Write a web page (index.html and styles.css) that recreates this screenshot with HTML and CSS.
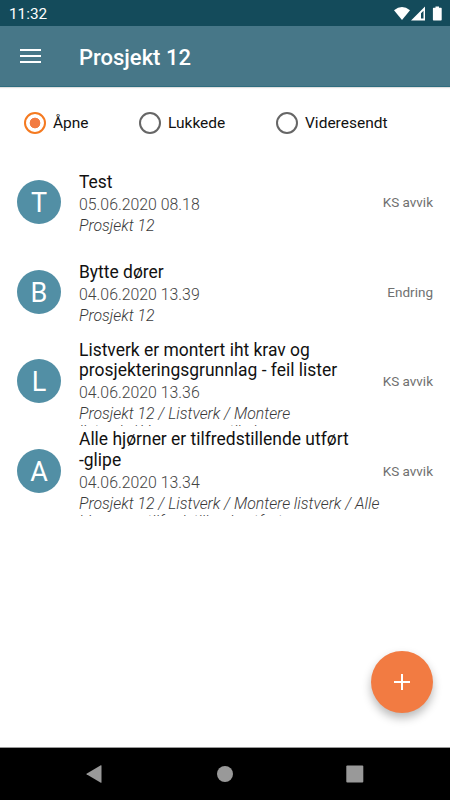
FILE: index.html
```
<!DOCTYPE html>
<html lang="no">
<head>
    <meta charset="UTF-8">
    <meta name="viewport" content="width=device-width, initial-scale=1.0">
    <title>Prosjekt 12</title>
    <link rel="stylesheet" href="styles.css">
</head>
<body>
    <div class="status-bar">
        <span class="clock">11:32</span>
        <svg class="status-icons" width="50" height="18" viewBox="0 0 50 18">
            <path fill="#fff" d="M1 4.2 Q9 -2 17 4.2 L9 14 Z"/>
            <path fill="#fff" fill-rule="evenodd" d="M18 14.5 L32 .5 V14.5 Z M28 7.2 V12.5 H30.5 V4.7 Z"/>
            <path fill="#fff" d="M42.5 .5 h3.5 v1.2 h2 q.7 0 .7 .7 v11.4 q0 .7 -.7 .7 h-7.4 q-.7 0 -.7 -.7 v-11.4 q0 -.7 .7 -.7 h1.9 z"/>
        </svg>
    </div>

    <header class="toolbar">
        <button class="menu" type="button" aria-label="Meny">
            <svg width="22" height="16" viewBox="0 0 22 16">
                <path fill="#fff" d="M0 1h21v2H0zM0 7h21v2H0zM0 13h21v2H0z"/>
            </svg>
        </button>
        <h1>Prosjekt 12</h1>
    </header>

    <main>
        <form class="filters">
            <label class="open"><input type="radio" name="status" checked><span>Åpne</span></label>
            <label class="closed"><input type="radio" name="status"><span>Lukkede</span></label>
            <label><input type="radio" name="status"><span>Videresendt</span></label>
        </form>

        <ul class="cases">
            <li>
                <div class="avatar">T</div>
                <div class="details">
                    <h2>Test</h2>
                    <time>05.06.2020 08.18</time>
                    <p>Prosjekt 12</p>
                </div>
                <span class="type">KS avvik</span>
            </li>
            <li>
                <div class="avatar">B</div>
                <div class="details">
                    <h2>Bytte dører</h2>
                    <time>04.06.2020 13.39</time>
                    <p>Prosjekt 12</p>
                </div>
                <span class="type">Endring</span>
            </li>
            <li class="long">
                <div class="avatar">L</div>
                <div class="details">
                    <h2>Listverk er montert iht krav og<br>prosjekteringsgrunnlag - feil lister</h2>
                    <time>04.06.2020 13.36</time>
                    <p>Prosjekt 12 / Listverk / Montere<br>listverk / Vegger er vertikale</p>
                </div>
                <span class="type">KS avvik</span>
            </li>
            <li class="long">
                <div class="avatar">A</div>
                <div class="details">
                    <h2>Alle hjørner er tilfredstillende utført<br>-glipe</h2>
                    <time>04.06.2020 13.34</time>
                    <p>Prosjekt 12 / Listverk / Montere listverk / Alle<br>hjørner er tilfredstillende utført</p>
                </div>
                <span class="type">KS avvik</span>
            </li>
        </ul>
    </main>

    <button class="fab" type="button" aria-label="Ny sak">
        <svg width="16" height="16" viewBox="0 0 16 16">
            <path fill="#fff" d="M7 0h2v7h7v2H9v7H7V9H0V7h7z"/>
        </svg>
    </button>

    <nav class="nav-bar">
        <svg width="18" height="20" viewBox="0 0 18 20"><path fill="#999" d="M.5 9.7 L14.8 1.3 Q15.5 1 15.5 1.8 V18.2 Q15.5 19 14.8 18.7 L.5 10.3 Q.1 10 .5 9.7z"/></svg>
        <svg width="18" height="20" viewBox="0 0 18 20"><circle cx="9" cy="10" r="8" fill="#999"/></svg>
        <svg width="18" height="20" viewBox="0 0 18 20"><rect x=".3" y="1.5" width="17" height="17" rx="1" fill="#999"/></svg>
    </nav>
</body>
</html>
```

FILE: styles.css
```
* {
    box-sizing: border-box;
}

body {
    display: flex;
    flex-direction: column;
    height: 100vh;
    margin: 0;
    overflow: hidden;
    background-color: #fff;
    font-family: Roboto, sans-serif;
}

h1, h2, p, ul {
    margin: 0;
    padding: 0;
}

button {
    padding: 0;
    border: none;
    background: none;
    cursor: pointer;
}

svg {
    display: block;
}

.status-bar {
    display: flex;
    justify-content: space-between;
    align-items: center;
    flex: none;
    height: 26px;
    padding: 0 7px 0 9px;
    background-color: #144b5b;
}

.clock {
    padding-top: 2px;
    color: #fff;
    font-size: 15.3px;
}

.status-icons {
    margin-top: 3px;
}

.toolbar {
    display: flex;
    align-items: center;
    flex: none;
    height: 61px;
    padding-left: 20px;
    background-color: #477788;
    border-bottom: 1px solid #2f6d7f;
    box-shadow: 0 1px 1px rgba(0, 0, 0, 0.12);
}

.menu {
    width: 59px;
}

h1 {
    color: #fff;
    font-size: 22px;
    font-weight: 500;
    padding-top: 3px;
}

main {
    flex: 1;
}

.filters {
    display: flex;
    height: 70.4px;
    padding: 1px 0 0 24px;
}

.filters label {
    display: flex;
    align-items: center;
    gap: 7px;
    color: #111;
    font-size: 15.5px;
}

.filters span {
    padding-top: 1px;
}

.filters .open {
    width: 115px;
}

.filters .closed {
    width: 137px;
}

.filters input {
    -webkit-appearance: none;
    appearance: none;
    width: 22px;
    height: 22px;
    margin: 0;
    border: 2px solid #666;
    border-radius: 50%;
}

.filters input:checked {
    border-color: #f57a20;
    background: radial-gradient(circle, #f27b42 5px, transparent 5.7px);
}

.cases {
    list-style: none;
}

.cases li {
    display: flex;
    align-items: center;
    height: 89.6px;
    padding: 0 17px;
    overflow: hidden;
}

.avatar {
    flex: none;
    width: 44px;
    height: 44px;
    margin-right: 18px;
    border-radius: 50%;
    background-color: #528fa5;
    color: #fff;
    font-size: 27px;
    line-height: 46px;
    text-align: center;
}

.details {
    flex: 1;
    height: 100%;
    padding-top: 14.6px;
    white-space: nowrap;
}

.long .details {
    padding-top: 3px;
}

h2 {
    color: #111;
    font-size: 17.45px;
    font-weight: 400;
    line-height: 20.5px;
}

time {
    display: block;
    margin-top: 1.6px;
    color: #444;
    font-size: 15.85px;
    font-weight: 300;
    line-height: 22px;
}

.details p {
    padding-top: 1.2px;
    color: #3a3a3a;
    font-size: 15.8px;
    font-style: italic;
    font-weight: 300;
    line-height: 18px;
}

.type {
    color: #707070;
    font-size: 13.5px;
}

/* flytende knapp over listen */
.fab {
    position: absolute;
    right: 17px;
    bottom: 87px;
    display: flex;
    justify-content: center;
    align-items: center;
    width: 62px;
    height: 62px;
    border-radius: 50%;
    background-color: #f27b42;
    box-shadow: 0 5px 10px rgba(0, 0, 0, 0.28);
}

.nav-bar {
    display: flex;
    flex: none;
    justify-content: center;
    align-items: center;
    gap: 112px;
    height: 53px;
    border-top: 1px solid #999;
    background-color: #000;
}
```
